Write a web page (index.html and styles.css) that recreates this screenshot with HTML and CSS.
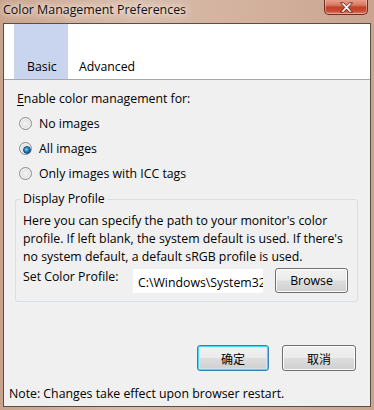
FILE: index.html
```html
<!DOCTYPE html>
<html>
<head>
<meta charset="utf-8">
<link rel="stylesheet" href="styles.css">
</head>
<body>
<div class="window">
  <div class="titlebar">
    <span class="title">Color Management Preferences</span>
    <div class="close">
      <svg width="17" height="11" viewBox="0 0 17 11"><path d="M2.5 0.8h3.2l2.8 3 2.8-3h3.2l-4.3 4.6 4.3 4.8h-3.2l-2.8-3.1-2.8 3.1h-3.2l4.3-4.8z" fill="#fff" stroke="#5a2418" stroke-width="0.9" stroke-linejoin="round"/></svg>
    </div>
  </div>
  <div class="client">
    <div class="tabs">
      <div class="tab active">Basic</div>
      <div class="tab">Advanced</div>
    </div>
    <div class="content">
      <div class="heading"><u>E</u>nable color management for:</div>
      <label class="radio-row"><span class="radio"></span>No images</label>
      <label class="radio-row"><span class="radio checked"></span>All images</label>
      <label class="radio-row"><span class="radio"></span>Only images with ICC tags</label>
      <fieldset class="group">
        <legend>Display Profile</legend>
        <p class="desc">Here you can specify the path to your monitor's color profile. If left blank, the system default is used. If there's no system default, a default sRGB profile is used.</p>
        <div class="profile-row">
          <span class="profile-label">Set Color Profile:</span>
          <input class="input" type="text" readonly value="C:\Windows\System32\spool\drivers\color">
          <div class="btn browse">Browse</div>
        </div>
      </fieldset>
      <div class="actions">
        <div class="btn ok">确定</div>
        <div class="btn cancel">取消</div>
      </div>
      <div class="note">Note: Changes take effect upon browser restart.</div>
    </div>
  </div>
</div>
</body>
</html>
```
FILE: styles.css
```css
* { box-sizing: border-box; }
html, body { margin: 0; padding: 0; }
body {
  width: 374px;
  height: 410px;
  overflow: hidden;
  font-family: "Open Sans", "Noto Sans CJK SC", sans-serif;
  font-size: 12.3px;
  color: #000;
}
.window {
  width: 374px;
  height: 410px;
  background: linear-gradient(to right, #c9a28c 0%, #d8bcaa 35%, #d2b09c 70%, #c9a590 100%);
  display: flex;
  flex-direction: column;
}
.titlebar {
  height: 23px;
  display: flex;
  justify-content: space-between;
  align-items: flex-start;
  padding-left: 3px;
  padding-right: 6px;
}
.title {
  font-size: 12.4px;
  line-height: 20px;
  color: #111;
  text-shadow: 0 0 8px #f3e6dc, 0 0 12px #f3e6dc, 0 0 4px #f6ece4;
}
.close {
  width: 44px;
  height: 16px;
  margin-top: -1px;
  border: 1px solid #6e2d20;
  border-top: none;
  border-radius: 0 0 5px 5px;
  background: linear-gradient(to bottom, #e9a592 0%, #d97a62 40%, #c2412a 55%, #c84b31 80%, #e0876c 100%);
  box-shadow: inset 0 0 0 1px rgba(255,220,200,0.45);
  display: flex;
  align-items: center;
  justify-content: center;
}
.close svg { display: block; margin-top: 1px; }
.client {
  margin: 0 3px;
  height: 384px;
  border: 1px solid #5b4c44;
  background: #f0f0f0;
  display: flex;
  flex-direction: column;
}
.tabs {
  height: 56px;
  background: #fff;
  border-bottom: 1px solid #a7a7a7;
  display: flex;
  padding-left: 10px;
  flex: none;
}
.tab {
  height: 55px;
  display: flex;
  align-items: flex-end;
  padding: 0 11px 4px 11px;
  font-size: 12.3px;
  line-height: 16px;
}
.tab.active {
  background: #c9d4ef;
  width: 54px;
  padding-left: 13px;
}
.content {
  padding: 10px 0 0 13px;
  display: flex;
  flex-direction: column;
  flex: 1;
}
.heading { line-height: 18px; height: 18px; }
.heading u { text-decoration-thickness: 1px; text-underline-offset: 2px; }
.radio-row {
  height: 25px;
  display: flex;
  align-items: center;
  padding-left: 2px;
  gap: 7px;
}
.radio-row:first-of-type { margin-top: 3px; }
.radio {
  width: 13px;
  height: 13px;
  border-radius: 50%;
  border: 1px solid #8a8a8a;
  background: radial-gradient(circle at 50% 50%, #f4f4f4 0%, #e2e2e2 55%, #cfcfcf 100%);
  box-shadow: inset 0 0 0 1px #f8f8f8;
  position: relative;
  flex: none;
}
.radio.checked::after {
  content: "";
  position: absolute;
  left: 2.5px;
  top: 2.5px;
  width: 6px;
  height: 6px;
  border-radius: 50%;
  background: radial-gradient(circle at 40% 40%, #8fd5f7 0%, #1f7fc4 45%, #0b3f73 100%);
  border: 0.5px solid #174d80;
}
.group {
  margin: 4px 12px 0 -2px;
  padding: 0 7px 7px 7px;
  border: 1px solid #d5dfe5;
  border-radius: 3px;
  min-width: 0;
}
.group legend {
  padding: 0 2px;
  margin-left: -2px;
  line-height: 18px;
}
.desc {
  margin: 4px 0 0 0;
  line-height: 18px;
}
.profile-row {
  display: flex;
  align-items: flex-start;
  margin-top: 2px;
}
.profile-label {
  width: 109px;
  line-height: 18px;
  flex: none;
}
.input {
  width: 132px;
  height: 26px;
  margin: 0;
  background: #fff;
  border: 1px solid #f0f0f0;
  outline: none;
  padding: 2px 0 0 5px;
  font-family: "Open Sans", sans-serif;
  font-size: 12.3px;
  color: #000;
  flex: none;
}
.btn {
  display: flex;
  align-items: center;
  justify-content: center;
  border: 1px solid #707070;
  border-radius: 3px;
  background: linear-gradient(to bottom, #f2f2f2 0%, #ebebeb 48%, #dddddd 52%, #cfcfcf 100%);
  box-shadow: inset 0 0 0 1px #fbfbfb;
  font-size: 12.3px;
}
.browse {
  width: 73px;
  height: 25px;
  margin-left: 11px;
}
.actions {
  display: flex;
  justify-content: flex-end;
  gap: 13px;
  margin-top: 43px;
  padding-right: 14px;
}
.actions .btn {
  height: 26px;
  font-family: "Noto Sans CJK SC", sans-serif;
  font-size: 12px;
}
.ok {
  width: 72px;
  border-color: #3c7fb1;
  box-shadow: inset 0 0 0 1px #48d7fb, inset 0 0 0 2px rgba(200,240,255,0.6);
}
.cancel { width: 74px; }
.note {
  margin-top: auto;
  margin-left: -8px;
  padding-bottom: 3px;
  line-height: 18px;
}
```
